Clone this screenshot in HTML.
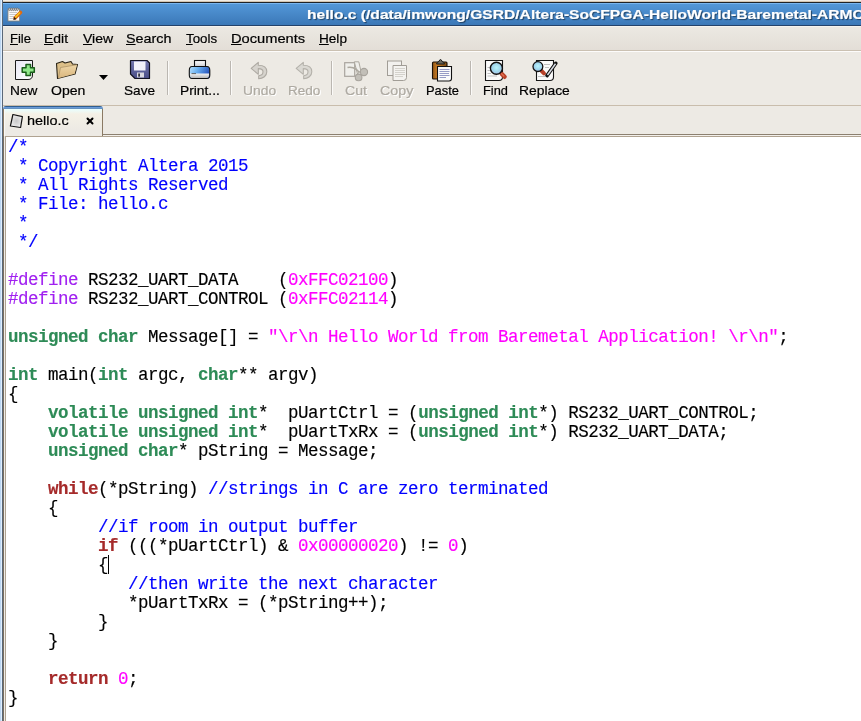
<!DOCTYPE html>
<html><head><meta charset="utf-8">
<style>
html,body{margin:0;padding:0;}
body{width:861px;height:721px;overflow:hidden;position:relative;background:#fff;font-family:"Liberation Sans",sans-serif;}
.a{position:absolute;}
.t{position:absolute;white-space:pre;line-height:1;-webkit-text-stroke:0.2px currentColor;transform-origin:0 0;font-family:"Liberation Sans",sans-serif;}
.t u{text-decoration:underline;text-underline-offset:1px;}
.ln{position:absolute;left:8px;height:19px;line-height:19px;white-space:pre;font-family:"Liberation Mono",monospace;font-size:17.5px;letter-spacing:-0.5px;color:#000;-webkit-text-stroke:0.15px currentColor;}
.ln b{font-weight:bold;}
</style></head><body><div id="root" style="position:absolute;left:0;top:0;width:861px;height:721px;will-change:transform;">
<!-- left strip of other window -->
<div class="a" style="left:0;top:0;width:1px;height:721px;background:#bcd6f2"></div>
<div class="a" style="left:1px;top:0;width:1px;height:721px;background:#e0eefc"></div>
<div class="a" style="left:2px;top:0;width:1px;height:721px;background:#5a6878"></div>
<!-- top strip -->
<div class="a" style="left:3px;top:0;width:858px;height:1px;background:#f1ede7"></div>
<div class="a" style="left:3px;top:1px;width:858px;height:1px;background:#d3c5b1"></div>
<div class="a" style="left:3px;top:2px;width:858px;height:1px;background:#1f2429"></div>
<!-- title bar -->
<div class="a" style="left:3px;top:3px;width:858px;height:22px;background:linear-gradient(#5499da,#3b78b7)"></div>
<div class="a" style="left:3px;top:3px;width:858px;height:1px;background:#78b6f0"></div>
<div class="a" style="left:3px;top:25px;width:858px;height:1px;background:#24426a"></div>
<!-- menubar -->
<div class="a" style="left:3px;top:26px;width:858px;height:24px;background:linear-gradient(#ece9e3,#e3ded7)"></div>
<div class="a" style="left:3px;top:26px;width:858px;height:1px;background:#f6f3ee"></div>
<div class="a" style="left:3px;top:50px;width:858px;height:1px;background:#cbc1b2"></div>
<div class="a" style="left:3px;top:51px;width:858px;height:1px;background:#fdfcfb"></div>
<!-- toolbar -->
<div class="a" style="left:3px;top:52px;width:858px;height:53px;background:#edeae4"></div>
<div class="a" style="left:3px;top:105px;width:858px;height:1px;background:#c9bdac"></div>
<!-- tab area -->
<div class="a" style="left:3px;top:106px;width:858px;height:31px;background:#edeae4"></div>
<div class="a" style="left:103px;top:134px;width:758px;height:1px;background:#8c8070"></div>
<div class="a" style="left:103px;top:135px;width:758px;height:1px;background:#f3f0eb"></div>
<div class="a" style="left:6px;top:136px;width:855px;height:1px;background:#b0a391"></div>
<!-- tab -->
<div class="a" style="left:3px;top:106px;width:100px;height:30px;border-radius:3px 3px 0 0;overflow:hidden;background:linear-gradient(#2f5f8f 0,#2f5f8f 1px,#6a9ad8 1px,#6a9ad8 2px,#6490c0 2px,#6490c0 3px,#e8ffff 3px,#f5f1e6 8px,#edeae4 24px);">
<div class="a" style="left:0;top:3px;width:1px;height:27px;background:#8a7a64"></div>
<div class="a" style="left:1px;top:3px;width:1px;height:27px;background:#fbfaf6"></div>
<div class="a" style="left:99px;top:3px;width:1px;height:27px;background:#8a7a64"></div>
</div>
<!-- editor frame left -->
<div class="a" style="left:3px;top:136px;width:1px;height:585px;background:#7b7060"></div>
<div class="a" style="left:4px;top:136px;width:1px;height:585px;background:#f0ede8"></div>
<div class="a" style="left:5px;top:136px;width:1px;height:585px;background:#afa291"></div>
<svg class="a" style="left:0;top:0" width="861" height="140" viewBox="0 0 861 140">
<defs>
<linearGradient id="gPage" x1="0" y1="0" x2="1" y2="1"><stop offset="0" stop-color="#e8e8f4"/><stop offset="1" stop-color="#ffffff"/></linearGradient>
<linearGradient id="gFold" x1="0" y1="0" x2="0" y2="1"><stop offset="0" stop-color="#efd7a8"/><stop offset="1" stop-color="#d9b57c"/></linearGradient>
<linearGradient id="gFloppy" x1="0" y1="0" x2="0" y2="1"><stop offset="0" stop-color="#7478b0"/><stop offset="1" stop-color="#4a4e88"/></linearGradient>
<linearGradient id="gPrint" x1="0" y1="0" x2="1" y2="0.3"><stop offset="0" stop-color="#bfe6ff"/><stop offset="0.45" stop-color="#6ab0f0"/><stop offset="1" stop-color="#2a58c0"/></linearGradient>
<linearGradient id="gClip" x1="0" y1="0" x2="1" y2="0"><stop offset="0" stop-color="#8a5418"/><stop offset="0.3" stop-color="#c87a22"/><stop offset="1" stop-color="#7a4a14"/></linearGradient>
<radialGradient id="gLens" cx="0.5" cy="0.45" r="0.6"><stop offset="0" stop-color="#b8f4fc"/><stop offset="0.6" stop-color="#9ed4ec"/><stop offset="1" stop-color="#b8bce8"/></radialGradient>
<linearGradient id="gPencil" x1="0" y1="0" x2="1" y2="0"><stop offset="0" stop-color="#f8d020"/><stop offset="1" stop-color="#e86810"/></linearGradient>
<linearGradient id="gPaper" x1="0" y1="0" x2="0" y2="1"><stop offset="0" stop-color="#ffffff"/><stop offset="1" stop-color="#c8c8cc"/></linearGradient>
<linearGradient id="gTray" x1="0" y1="0" x2="0" y2="1"><stop offset="0" stop-color="#f4f4f4"/><stop offset="1" stop-color="#b8b8b8"/></linearGradient>
<radialGradient id="gTabIc" cx="0.5" cy="0.5" r="0.55"><stop offset="0" stop-color="#c8c8c8"/><stop offset="0.7" stop-color="#e4e4e4"/><stop offset="1" stop-color="#ffffff"/></radialGradient>
</defs>
<!-- title app icon -->
<g>
<rect x="8" y="9" width="11.5" height="12" fill="#fafafa" stroke="#8a8274" stroke-width="0.8"/>
<g stroke="#c8c8c8" stroke-width="1"><line x1="9.5" y1="12.5" x2="17" y2="12.5"/><line x1="9.5" y1="14.5" x2="17" y2="14.5"/><line x1="9.5" y1="16.5" x2="14" y2="16.5"/><line x1="9.5" y1="18.5" x2="13" y2="18.5"/></g>
<g fill="#eeeeee" stroke="#606060" stroke-width="0.7"><rect x="8.6" y="8" width="1.5" height="2.6" rx="0.7"/><rect x="10.6" y="8" width="1.5" height="2.6" rx="0.7"/><rect x="12.6" y="8" width="1.5" height="2.6" rx="0.7"/><rect x="14.6" y="8" width="1.5" height="2.6" rx="0.7"/><rect x="16.6" y="8" width="1.5" height="2.6" rx="0.7"/></g>
<line x1="20.5" y1="12.5" x2="15" y2="18" stroke="#e06a10" stroke-width="3.6" stroke-linecap="round"/>
<line x1="20" y1="12.6" x2="15.2" y2="17.4" stroke="#f8d020" stroke-width="1.4"/>
<path d="M14.2,17 L16.4,19 L13.2,20 Z" fill="#222"/>
</g>
<!-- New -->
<g>
<path d="M15.5,60.5 H32.5 V75 Q32.5,79.5 28,79.5 H15.5 Z" fill="url(#gPage)" stroke="#1a1a1a" stroke-width="1"/>
<path d="M26,64.5 h4.5 v3.3 h3.8 v4.4 h-3.8 v3.3 h-4.5 v-3.3 h-3.8 v-4.4 h3.8 z" fill="#90e88a" stroke="#1a5e1a" stroke-width="1.5" stroke-linejoin="round"/>
</g>
<!-- Open -->
<g>
<path d="M56.5,63.5 L62.5,61.5 L65,63 L71,61.5 L72.5,64 L77.5,64.5 L75,74 L57.5,78.5 Z" fill="#dcbf88" stroke="#2a2418" stroke-width="1.1" stroke-linejoin="round"/>
<path d="M60.5,67.5 L77,64.8 L74.7,73.8 L58,78.2 Z" fill="url(#gFold)"/>
<path d="M58.5,77.5 L60.5,67.5 L76.8,64.8" fill="none" stroke="#a88c60" stroke-width="0.7"/>
</g>
<!-- dropdown arrow -->
<path d="M99,75 H108 L103.5,80 Z" fill="#000"/>
<!-- Save -->
<g>
<path d="M130.5,60.5 H147 L149.5,63 V78.5 H135 L130.5,74 Z" fill="url(#gFloppy)" stroke="#121222" stroke-width="1.2" stroke-linejoin="round"/>
<rect x="134" y="61.5" width="11.5" height="9" fill="#f2f2fa"/>
<rect x="137" y="72.5" width="7" height="5" fill="#d8d8e0"/>
<rect x="138.3" y="73.5" width="1.6" height="3.2" fill="#202030"/>
</g>
<!-- Print -->
<g>
<rect x="194.5" y="60.5" width="11" height="7" fill="url(#gPaper)" stroke="#111" stroke-width="1.1"/>
<path d="M192,66.5 H207 Q209.8,66.5 209.8,70.5 V75 Q209.8,78.5 207,78.5 H192 Q189.3,78.5 189.3,75 V70.5 Q189.3,66.5 192,66.5 Z" fill="url(#gPrint)" stroke="#111" stroke-width="1.1"/>
<path d="M190,73.5 H209 V75 Q209,77.9 206.5,77.9 H192.5 Q190,77.9 190,75 Z" fill="url(#gTray)"/>
<line x1="191.5" y1="73.6" x2="196" y2="73.6" stroke="#555" stroke-width="0.9"/>
</g>
<!-- separators -->
<g fill="#bbb7b1"><rect x="167" y="61" width="1" height="34"/><rect x="230" y="61" width="1" height="34"/><rect x="331" y="61" width="1" height="34"/><rect x="470" y="61" width="1" height="34"/></g>
<g fill="#fbfaf8"><rect x="168" y="61" width="1" height="34"/><rect x="231" y="61" width="1" height="34"/><rect x="332" y="61" width="1" height="34"/><rect x="471" y="61" width="1" height="34"/></g>
<!-- Undo -->
<path d="M251.2,68.3 L258.3,62.3 L258.3,65.3 C263.5,65.3 266.8,67.8 266.8,71.8 C266.8,75.8 263,78.6 258.7,78.7 L258.7,75.8 C261,75.6 263,74 263,71.8 C263,69.5 261,68.6 258.3,68.6 L258.3,74.3 Z" fill="#d6d3cd" stroke="#aeaaa3" stroke-width="1.1" stroke-linejoin="round"/>
<!-- Redo -->
<path transform="translate(45,0)" d="M251.2,68.3 L258.3,62.3 L258.3,65.3 C263.5,65.3 266.8,67.8 266.8,71.8 C266.8,75.8 263,78.6 258.7,78.7 L258.7,75.8 C261,75.6 263,74 263,71.8 C263,69.5 261,68.6 258.3,68.6 L258.3,74.3 Z" fill="#dad8d2" stroke="#b4b1aa" stroke-width="1.1" stroke-linejoin="round"/>
<!-- Cut -->
<g>
<rect x="344.7" y="62.7" width="10" height="13.6" fill="#f0efeb" stroke="#a8a49d" stroke-width="1.2"/>
<path d="M354.3,61.8 L358.8,61.8 L360.8,70.5 L357.5,74 Z" fill="#efeeea" stroke="#aca89f" stroke-width="1"/>
<path d="M347.5,67.5 Q352,66.5 356.5,69.5 L359.5,72.5" fill="none" stroke="#aca89f" stroke-width="1.6"/>
<circle cx="364" cy="72" r="3.6" fill="#c2bfb8" stroke="#a8a49d" stroke-width="1.1"/>
<circle cx="358.6" cy="77.4" r="3.3" fill="#c2bfb8" stroke="#a8a49d" stroke-width="1.1"/>
</g>
<!-- Copy -->
<g>
<rect x="387.5" y="61" width="14" height="14.5" fill="#f2f1ee" stroke="#a19d96" stroke-width="1"/>
<path d="M393,65.5 H406.5 V77.5 Q406.5,80.5 403.5,80.5 H393 Z" fill="#f4f3f0" stroke="#a19d96" stroke-width="1"/>
<g stroke="#ccc9c3" stroke-width="0.8"><line x1="395" y1="68.5" x2="405" y2="68.5"/><line x1="395" y1="70.5" x2="405" y2="70.5"/><line x1="395" y1="72.5" x2="405" y2="72.5"/><line x1="395" y1="74.5" x2="405" y2="74.5"/><line x1="395" y1="76.5" x2="403" y2="76.5"/></g>
</g>
<!-- Paste -->
<g>
<rect x="432.5" y="62" width="14.5" height="17" rx="1" fill="url(#gClip)" stroke="#1a1008" stroke-width="1.1"/>
<path d="M436.5,64 Q437,61.8 439,61.5 Q439.5,59.5 440.5,59.5 Q441.5,59.5 442,61.5 Q444,61.8 444.5,64 Z" fill="#6a6a60" stroke="#1a1a1a" stroke-width="1"/>
<path d="M437.5,66.5 H451.5 V78.5 Q451.5,81 449,81 H437.5 Z" fill="#fbfbfb" stroke="#111" stroke-width="1.1"/>
<g stroke="#8a90c0" stroke-width="0.9"><line x1="439.5" y1="69.5" x2="449.5" y2="69.5"/><line x1="439.5" y1="71.5" x2="449.5" y2="71.5"/><line x1="439.5" y1="73.5" x2="449" y2="73.5"/><line x1="439.5" y1="75.5" x2="449.5" y2="75.5"/><line x1="439.5" y1="77.5" x2="446" y2="77.5"/></g>
</g>
<!-- Find -->
<g>
<path d="M485.5,60.5 H502.5 V77 Q502.5,80.5 499,80.5 H485.5 Z" fill="#fafafa" stroke="#151515" stroke-width="1.1"/>
<g stroke="#b0b0b0" stroke-width="0.8"><line x1="487.5" y1="67.5" x2="490" y2="67.5"/><line x1="487.5" y1="70.5" x2="490" y2="70.5"/><line x1="487.5" y1="73.5" x2="491" y2="73.5"/><line x1="487.5" y1="76" x2="497" y2="76"/></g>
<line x1="501.8" y1="74" x2="504.6" y2="76.8" stroke="#b84028" stroke-width="4.4" stroke-linecap="round"/>
<line x1="501.6" y1="73.8" x2="503.8" y2="76" stroke="#e07050" stroke-width="1.4" stroke-linecap="round"/>
<circle cx="496.4" cy="68.3" r="6" fill="url(#gLens)" stroke="#111" stroke-width="1.4"/>
</g>
<!-- Replace -->
<g>
<path d="M536.5,60.5 H553.5 V77 Q553.5,80.5 550,80.5 H536.5 Z" fill="#fafafa" stroke="#151515" stroke-width="1.1"/>
<g stroke="#b0b0b0" stroke-width="0.8"><line x1="544" y1="64.5" x2="550" y2="64.5"/><line x1="545" y1="67.5" x2="549" y2="67.5"/><line x1="538" y1="76.5" x2="545" y2="76.5"/></g>
<line x1="541.5" y1="70.8" x2="544" y2="73.3" stroke="#b84028" stroke-width="4" stroke-linecap="round"/>
<circle cx="537.9" cy="66.6" r="4.9" fill="url(#gLens)" stroke="#111" stroke-width="1.3"/>
<line x1="555.8" y1="63.3" x2="547" y2="75.6" stroke="#111" stroke-width="3.6" stroke-linecap="round"/>
<line x1="555.5" y1="63.7" x2="547.5" y2="75" stroke="#d8dce4" stroke-width="1.5"/>
</g>
<!-- tab icon -->
<path d="M12.9,114.5 L22.4,116.7 L20.6,127.5 L10.4,126 Z" fill="url(#gTabIc)" stroke="#111" stroke-width="1.2" stroke-linejoin="round"/>
<!-- tab close -->
<g stroke="#000" stroke-width="2" stroke-linecap="round"><line x1="87.5" y1="118.5" x2="92.5" y2="123.5"/><line x1="92.5" y1="118.5" x2="87.5" y2="123.5"/></g>
</svg>

<div class="t menu" style="left:10.00px;top:32.00px;font-size:13px;transform:scaleX(1.0000);color:#000;"><u>F</u>ile</div>
<div class="t menu" style="left:44.00px;top:32.00px;font-size:13px;transform:scaleX(1.0714);color:#000;"><u>E</u>dit</div>
<div class="t menu" style="left:82.60px;top:32.00px;font-size:13px;transform:scaleX(1.0783);color:#000;"><u>V</u>iew</div>
<div class="t menu" style="left:126.00px;top:32.00px;font-size:13px;transform:scaleX(1.1044);color:#000;"><u>S</u>earch</div>
<div class="t menu" style="left:186.00px;top:32.00px;font-size:13px;transform:scaleX(1.0231);color:#000;"><u>T</u>ools</div>
<div class="t menu" style="left:230.90px;top:32.00px;font-size:13px;transform:scaleX(1.1279);color:#000;"><u>D</u>ocuments</div>
<div class="t menu" style="left:319.00px;top:32.00px;font-size:13px;transform:scaleX(1.0449);color:#000;"><u>H</u>elp</div>
<div class="t " style="left:9.50px;top:84.00px;font-size:13px;transform:scaleX(1.0536);color:#000;">New</div>
<div class="t " style="left:50.50px;top:84.00px;font-size:13px;transform:scaleX(1.0818);color:#000;">Open</div>
<div class="t " style="left:123.90px;top:84.00px;font-size:13px;transform:scaleX(1.0473);color:#000;">Save</div>
<div class="t " style="left:179.60px;top:84.00px;font-size:13px;transform:scaleX(1.0612);color:#000;">Print...</div>
<div class="t " style="left:242.80px;top:84.00px;font-size:13px;transform:scaleX(1.0643);color:#aeaaa2;text-shadow:1px 1px 0 #ffffff;">Undo</div>
<div class="t " style="left:287.80px;top:84.00px;font-size:13px;transform:scaleX(1.0418);color:#aeaaa2;text-shadow:1px 1px 0 #ffffff;">Redo</div>
<div class="t " style="left:345.00px;top:84.00px;font-size:13px;transform:scaleX(1.0891);color:#aeaaa2;text-shadow:1px 1px 0 #ffffff;">Cut</div>
<div class="t " style="left:379.80px;top:84.00px;font-size:13px;transform:scaleX(1.0957);color:#aeaaa2;text-shadow:1px 1px 0 #ffffff;">Copy</div>
<div class="t " style="left:426.10px;top:84.00px;font-size:13px;transform:scaleX(0.9910);color:#000;">Paste</div>
<div class="t " style="left:483.10px;top:84.00px;font-size:13px;transform:scaleX(0.9842);color:#000;">Find</div>
<div class="t " style="left:519.20px;top:84.00px;font-size:13px;transform:scaleX(1.0650);color:#000;">Replace</div>
<div class="t " style="left:27.20px;top:114.00px;font-size:13px;transform:scaleX(1.1117);color:#000;">hello.c</div>
<div class="t" style="left:307.00px;top:8.00px;font-size:13px;font-weight:bold;color:#fff;transform:scaleX(1.2015);text-shadow:1px 1px 1px rgba(0,0,0,0.5);">hello.c (/data/imwong/GSRD/Altera-SoCFPGA-HelloWorld-Baremetal-ARMC</div>
<div class="ln" style="top:138px"><span style="color:#0000ff">/*</span></div>
<div class="ln" style="top:157px"><span style="color:#0000ff"> * Copyright Altera 2015</span></div>
<div class="ln" style="top:176px"><span style="color:#0000ff"> * All Rights Reserved</span></div>
<div class="ln" style="top:195px"><span style="color:#0000ff"> * File: hello.c</span></div>
<div class="ln" style="top:214px"><span style="color:#0000ff"> *</span></div>
<div class="ln" style="top:233px"><span style="color:#0000ff"> */</span></div>
<div class="ln" style="top:252px"></div>
<div class="ln" style="top:271px"><span style="color:#a020f0">#define</span> RS232_UART_DATA    (<span style="color:#ff00ff">0xFFC02100</span>)</div>
<div class="ln" style="top:290px"><span style="color:#a020f0">#define</span> RS232_UART_CONTROL (<span style="color:#ff00ff">0xFFC02114</span>)</div>
<div class="ln" style="top:309px"></div>
<div class="ln" style="top:328px"><b style="color:#2e8b57">unsigned</b> <b style="color:#2e8b57">char</b> Message[] = <span style="color:#ff00ff">&quot;\r\n Hello World from Baremetal Application! \r\n&quot;</span>;</div>
<div class="ln" style="top:347px"></div>
<div class="ln" style="top:366px"><b style="color:#2e8b57">int</b> main(<b style="color:#2e8b57">int</b> argc, <b style="color:#2e8b57">char</b>** argv)</div>
<div class="ln" style="top:385px">{</div>
<div class="ln" style="top:404px">    <b style="color:#2e8b57">volatile</b> <b style="color:#2e8b57">unsigned</b> <b style="color:#2e8b57">int</b>*  pUartCtrl = (<b style="color:#2e8b57">unsigned</b> <b style="color:#2e8b57">int</b>*) RS232_UART_CONTROL;</div>
<div class="ln" style="top:423px">    <b style="color:#2e8b57">volatile</b> <b style="color:#2e8b57">unsigned</b> <b style="color:#2e8b57">int</b>*  pUartTxRx = (<b style="color:#2e8b57">unsigned</b> <b style="color:#2e8b57">int</b>*) RS232_UART_DATA;</div>
<div class="ln" style="top:442px">    <b style="color:#2e8b57">unsigned</b> <b style="color:#2e8b57">char</b>* pString = Message;</div>
<div class="ln" style="top:461px"></div>
<div class="ln" style="top:480px">    <b style="color:#a52a2a">while</b>(*pString) <span style="color:#0000ff">//strings in C are zero terminated</span></div>
<div class="ln" style="top:499px">    {</div>
<div class="ln" style="top:518px">         <span style="color:#0000ff">//if room in output buffer</span></div>
<div class="ln" style="top:537px">         <b style="color:#a52a2a">if</b> (((*pUartCtrl) &amp; <span style="color:#ff00ff">0x00000020</span>) != <span style="color:#ff00ff">0</span>)</div>
<div class="ln" style="top:556px">         {</div>
<div class="ln" style="top:575px">            <span style="color:#0000ff">//then write the next character</span></div>
<div class="ln" style="top:594px">            *pUartTxRx = (*pString++);</div>
<div class="ln" style="top:613px">         }</div>
<div class="ln" style="top:632px">    }</div>
<div class="ln" style="top:651px"></div>
<div class="ln" style="top:670px">    <b style="color:#a52a2a">return</b> <span style="color:#ff00ff">0</span>;</div>
<div class="ln" style="top:689px">}</div>
<!-- cursor -->
<div class="a" style="left:108px;top:555px;width:1px;height:19px;background:#000"></div>
</div></body></html>
